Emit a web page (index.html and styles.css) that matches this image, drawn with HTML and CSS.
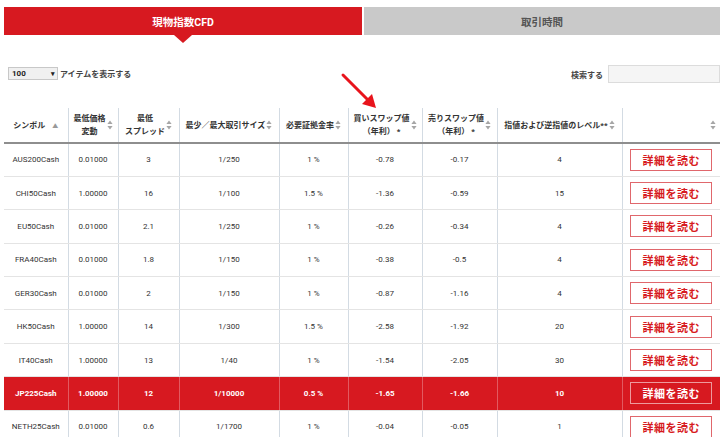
FILE: index.html
```html
<!DOCTYPE html>
<html lang="ja">
<head>
<meta charset="utf-8">
<link rel="stylesheet" href="styles.css">
</head>
<body>
<div class="page">
  <div class="tabs">
    <div class="tab active">現物指数CFD</div>
    <div class="tab">取引時間</div>
  </div>
  <div class="toolbar">
    <div class="length">
      <div class="select">100<span class="caret">▾</span></div>
      <span>アイテムを表示する</span>
    </div>
    <div class="search">
      <span>検索する</span>
      <div class="input"></div>
    </div>
  </div>
  <table class="grid">
    <colgroup>
      <col style="width:64px"><col style="width:50px"><col style="width:61px"><col style="width:100px"><col style="width:69px"><col style="width:74px"><col style="width:75px"><col style="width:125px"><col style="width:98px">
    </colgroup>
    <thead>
      <tr>
        <th><div class="hd"><span class="lbl">シンボル</span><span class="asc">▲</span></div></th>
        <th><div class="hd"><span class="lbl">最低価格<br>変動</span><svg class="sort" viewBox="0 0 6 10"><path d="M3 0.5 L5.6 4 H0.4 Z M3 9.5 L0.4 6 H5.6 Z"/></svg></div></th>
        <th><div class="hd"><span class="lbl">最低<br>スプレッド</span><svg class="sort" viewBox="0 0 6 10"><path d="M3 0.5 L5.6 4 H0.4 Z M3 9.5 L0.4 6 H5.6 Z"/></svg></div></th>
        <th><div class="hd"><span class="lbl">最少／最大取引サイズ</span><svg class="sort" viewBox="0 0 6 10"><path d="M3 0.5 L5.6 4 H0.4 Z M3 9.5 L0.4 6 H5.6 Z"/></svg></div></th>
        <th><div class="hd"><span class="lbl">必要証拠金率</span><svg class="sort" viewBox="0 0 6 10"><path d="M3 0.5 L5.6 4 H0.4 Z M3 9.5 L0.4 6 H5.6 Z"/></svg></div></th>
        <th><div class="hd"><span class="lbl">買いスワップ値<br>（年利） *</span><svg class="sort" viewBox="0 0 6 10"><path d="M3 0.5 L5.6 4 H0.4 Z M3 9.5 L0.4 6 H5.6 Z"/></svg></div></th>
        <th><div class="hd"><span class="lbl">売りスワップ値<br>（年利） *</span><svg class="sort" viewBox="0 0 6 10"><path d="M3 0.5 L5.6 4 H0.4 Z M3 9.5 L0.4 6 H5.6 Z"/></svg></div></th>
        <th><div class="hd"><span class="lbl">指値および逆指値のレベル**</span><svg class="sort" viewBox="0 0 6 10"><path d="M3 0.5 L5.6 4 H0.4 Z M3 9.5 L0.4 6 H5.6 Z"/></svg></div></th>
        <th><div class="hd end"><svg class="sort" viewBox="0 0 6 10"><path d="M3 0.5 L5.6 4 H0.4 Z M3 9.5 L0.4 6 H5.6 Z"/></svg></div></th>
      </tr>
    </thead>
    <tbody>
      <tr><td>AUS200Cash</td><td>0.01000</td><td>3</td><td>1/250</td><td>1 %</td><td>-0.78</td><td>-0.17</td><td>4</td><td><span class="btn">詳細を読む</span></td></tr>
      <tr><td>CHI50Cash</td><td>1.00000</td><td>16</td><td>1/100</td><td>1.5 %</td><td>-1.36</td><td>-0.59</td><td>15</td><td><span class="btn">詳細を読む</span></td></tr>
      <tr><td>EU50Cash</td><td>0.01000</td><td>2.1</td><td>1/250</td><td>1 %</td><td>-0.26</td><td>-0.34</td><td>4</td><td><span class="btn">詳細を読む</span></td></tr>
      <tr><td>FRA40Cash</td><td>0.01000</td><td>1.8</td><td>1/150</td><td>1 %</td><td>-0.38</td><td>-0.5</td><td>4</td><td><span class="btn">詳細を読む</span></td></tr>
      <tr><td>GER30Cash</td><td>0.01000</td><td>2</td><td>1/150</td><td>1 %</td><td>-0.87</td><td>-1.16</td><td>4</td><td><span class="btn">詳細を読む</span></td></tr>
      <tr><td>HK50Cash</td><td>1.00000</td><td>14</td><td>1/300</td><td>1.5 %</td><td>-2.58</td><td>-1.92</td><td>20</td><td><span class="btn">詳細を読む</span></td></tr>
      <tr><td>IT40Cash</td><td>1.00000</td><td>13</td><td>1/40</td><td>1 %</td><td>-1.54</td><td>-2.05</td><td>30</td><td><span class="btn">詳細を読む</span></td></tr>
      <tr class="hl"><td>JP225Cash</td><td>1.00000</td><td>12</td><td>1/10000</td><td>0.5 %</td><td>-1.65</td><td>-1.66</td><td>10</td><td><span class="btn">詳細を読む</span></td></tr>
      <tr><td>NETH25Cash</td><td>0.01000</td><td>0.6</td><td>1/1700</td><td>1 %</td><td>-0.04</td><td>-0.05</td><td>1</td><td><span class="btn">詳細を読む</span></td></tr>
    </tbody>
  </table>
  <svg class="pointer" viewBox="0 0 40 40" width="40" height="40">
    <line x1="3" y1="3" x2="28" y2="28" stroke="#e8141c" stroke-width="3" stroke-linecap="round"/>
    <path d="M36 36 L22 32 L32 22 Z" fill="#e8141c"/>
  </svg>
</div>
</body>
</html>
```
FILE: styles.css
```css
* { box-sizing: border-box; }
html, body { margin: 0; padding: 0; background: #fff; }
body {
  font-family: Roboto, "Noto Sans CJK JP", "Liberation Sans", sans-serif;
  color: #333;
}
.page {
  position: relative;
  width: 716px;
  margin-left: 4px;
  padding-top: 7px;
}
.tabs {
  display: flex;
  gap: 2px;
  height: 28px;
}
.tab {
  flex: 1;
  display: flex;
  align-items: center;
  justify-content: center;
  background: #c9c9c9;
  color: #555;
  font-weight: 700;
  font-size: 10.5px;
  position: relative;
}
.tab.active {
  flex: 0 0 358px;
  background: #d71920;
  color: #fff;
}
.tab.active::after {
  content: "";
  position: absolute;
  left: 50%;
  top: 100%;
  margin-left: -9px;
  border-left: 9px solid transparent;
  border-right: 9px solid transparent;
  border-top: 8px solid #d71920;
}
.toolbar {
  display: flex;
  justify-content: space-between;
  align-items: flex-start;
  padding: 30px 0 0 4px;
  height: 73px;
  font-size: 8px;
  font-weight: 700;
  color: #444;
}
.length {
  display: flex;
  align-items: center;
  gap: 2px;
  margin-top: 2px;
}
.select {
  width: 50px;
  height: 13px;
  background: #f0f0f0;
  border: 1px solid #c8c8c8;
  display: flex;
  align-items: center;
  justify-content: space-between;
  padding: 0 2px 0 3px;
  font-size: 8px;
  color: #222;
}
.caret { font-size: 7px; }
.search {
  display: flex;
  align-items: center;
  gap: 5px;
}
.input {
  width: 112px;
  height: 18px;
  background: #f5f5f5;
  border: 1px solid #dcdcdc;
}
.grid {
  width: 716px;
  border-collapse: collapse;
  table-layout: fixed;
}
.grid th {
  height: 35px;
  padding: 0 2px;
  font-size: 8px;
  font-weight: 700;
  color: #333;
  border-left: 1px solid #d3dbe3;
  border-bottom: 2px solid #8e8e8e;
  vertical-align: middle;
}
.grid th:first-child, .grid td:first-child { border-left: none; }
.hd {
  display: flex;
  align-items: center;
  justify-content: center;
  gap: 1px;
  line-height: 13px;
}
.hd.end { justify-content: flex-end; padding-right: 2px; }
.lbl { text-align: center; }
.asc { font-size: 6px; color: #999; margin-left: 6px; }
.sort { width: 6px; height: 10px; fill: #a6a6a6; flex: none; }
.grid td {
  height: 33.4px;
  padding: 0;
  text-align: center;
  font-size: 8px;
  color: #333;
  border-left: 1px solid #d3dbe3;
  border-bottom: 1px solid #e4e4e4;
}
.btn {
  display: inline-flex;
  align-items: center;
  justify-content: center;
  width: 82px;
  height: 22px;
  border: 1px solid #e0676c;
  color: #d71920;
  font-size: 11px;
  font-weight: 700;
  letter-spacing: 0.5px;
  background: #fff;
}
.grid tr.hl td {
  background: #d71920;
  color: #fff;
  font-weight: 700;
  border-left-color: #e25a60;
}
.grid tr.hl .btn {
  background: #d71920;
  color: #fff;
  border-color: #ee9a9d;
}
.pointer {
  position: absolute;
  left: 336px;
  top: 72px;
}
```
